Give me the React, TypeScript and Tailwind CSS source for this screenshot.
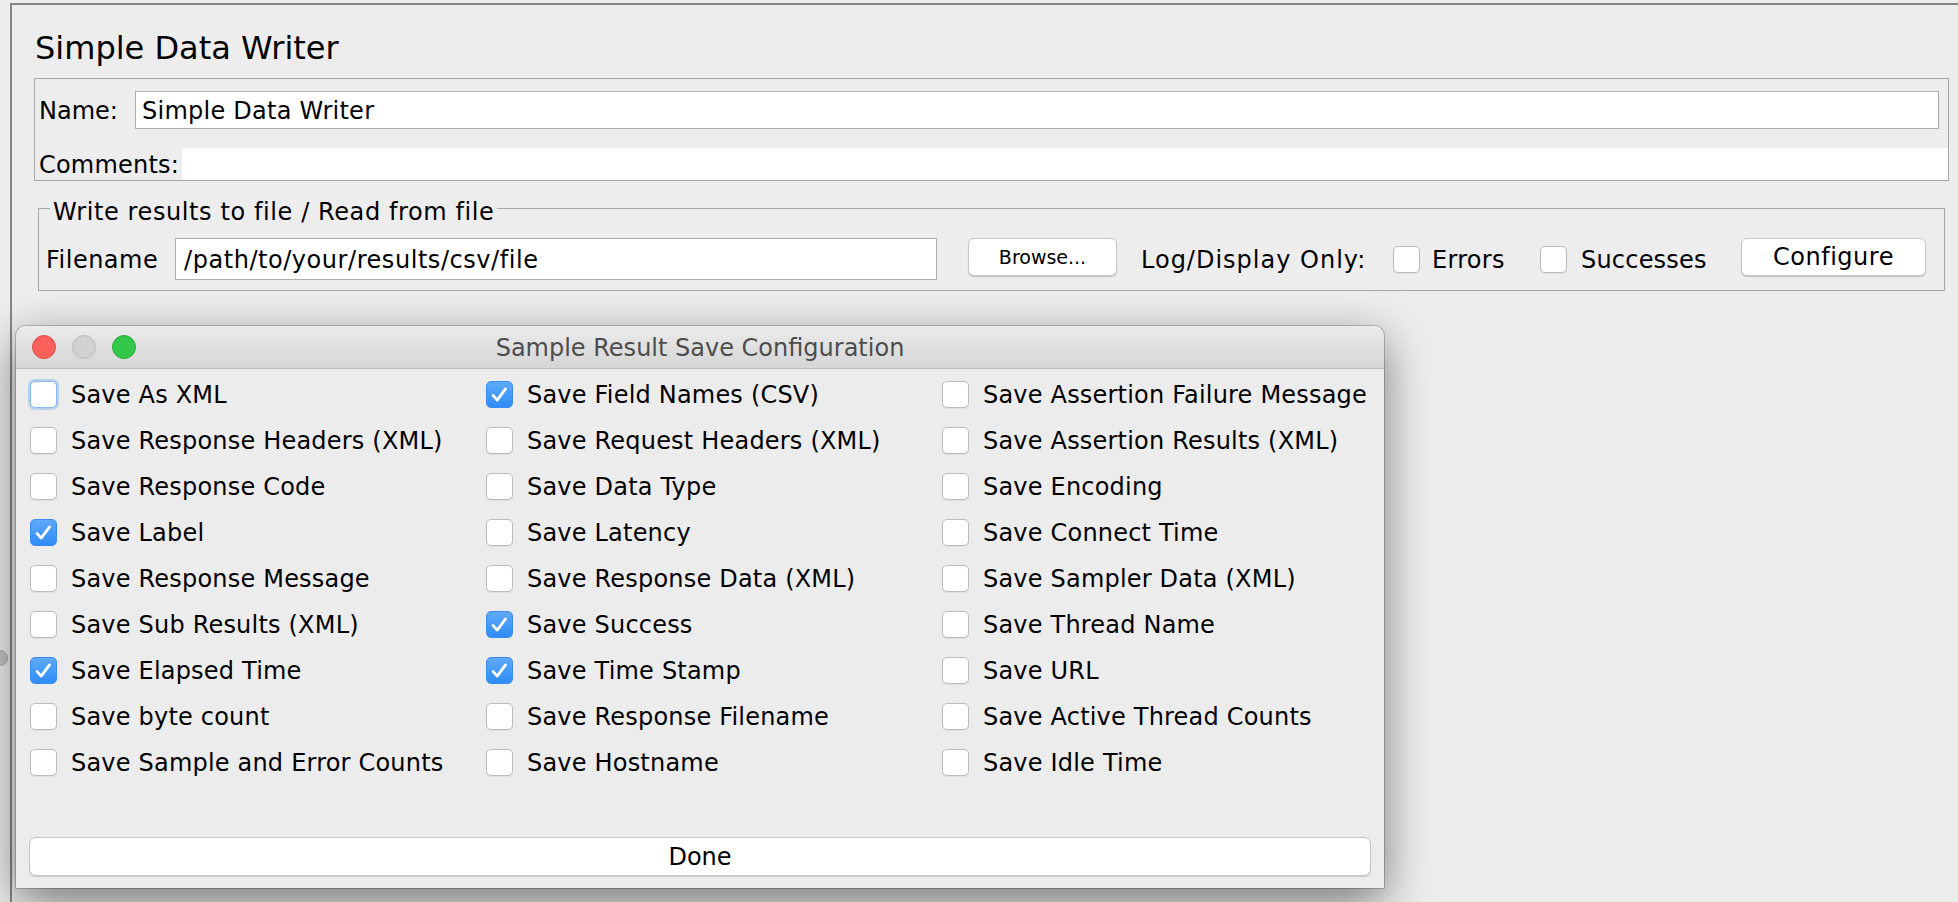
import React from "react";

const col1: [string, boolean][] = [
  ["Save As XML", false],
  ["Save Response Headers (XML)", false],
  ["Save Response Code", false],
  ["Save Label", true],
  ["Save Response Message", false],
  ["Save Sub Results (XML)", false],
  ["Save Elapsed Time", true],
  ["Save byte count", false],
  ["Save Sample and Error Counts", false],
];
const col2: [string, boolean][] = [
  ["Save Field Names (CSV)", true],
  ["Save Request Headers (XML)", false],
  ["Save Data Type", false],
  ["Save Latency", false],
  ["Save Response Data (XML)", false],
  ["Save Success", true],
  ["Save Time Stamp", true],
  ["Save Response Filename", false],
  ["Save Hostname", false],
];
const col3: [string, boolean][] = [
  ["Save Assertion Failure Message", false],
  ["Save Assertion Results (XML)", false],
  ["Save Encoding", false],
  ["Save Connect Time", false],
  ["Save Sampler Data (XML)", false],
  ["Save Thread Name", false],
  ["Save URL", false],
  ["Save Active Thread Counts", false],
  ["Save Idle Time", false],
];

function Box({ checked, focus }: { checked?: boolean; focus?: boolean }) {
  if (checked) {
    return (
      <span className="flex w-[27px] h-[27px] shrink-0 rounded-[5px] border border-[#3b8cf0] bg-[linear-gradient(to_bottom,#5eaafb,#2f8cf8)]">
        <svg viewBox="0 0 27 27" className="w-full h-full">
          <path
            d="M6.5 14.5 L11 19.5 L20 7.5"
            fill="none"
            stroke="white"
            strokeWidth="3"
            strokeLinecap="round"
            strokeLinejoin="round"
          />
        </svg>
      </span>
    );
  }
  if (focus) {
    return (
      <span className="block w-[27px] h-[27px] shrink-0 rounded-[5px] border border-[#8ab8f0] bg-white shadow-[0_0_0_2px_rgba(125,175,240,0.45)]" />
    );
  }
  return (
    <span className="block w-[27px] h-[27px] shrink-0 rounded-[5px] border border-[#bcbcbc] bg-white shadow-[0_1px_1px_rgba(0,0,0,0.06)]" />
  );
}

function Column({ items, first }: { items: [string, boolean][]; first?: boolean }) {
  return (
    <div className="flex flex-col">
      {items.map(([label, checked], i) => (
        <div key={label} className="h-[46px] flex items-center">
          <Box checked={checked} focus={first && i === 0} />
          <span className="ml-[14px] pt-[1px] text-[24px] tracking-[0.2px] whitespace-nowrap">{label}</span>
        </div>
      ))}
    </div>
  );
}

export default function App() {
  return (
    <div className="relative w-[1958px] h-[902px] overflow-hidden bg-[#ededed] text-black font-['DejaVu_Sans',sans-serif]">
      <div className="absolute left-[-8px] top-[650px] w-[16px] h-[16px] rounded-full bg-[#c4c4c4] border border-[#a9a9a9]" />
      <div className="ml-[10px] mt-[3px] h-[899px] border-l-2 border-t-2 border-[#868686] pl-[22px] pr-[9px] pt-[24px]">
        <div className="h-[38px] flex items-center pl-[1px] text-[32px] whitespace-nowrap">
          Simple Data Writer
        </div>

        <div className="mt-[11px] border border-[#a6a6a6] pl-[4px]">
          <div className="mt-[12px] h-[38px] flex items-center">
            <span className="w-[96px] shrink-0 pt-[1px] text-[24px]">Name:</span>
            <div className="flex-1 h-full mr-[9px] border border-[#ababab] bg-white pl-[6px] pt-[1px] flex items-center text-[24px] tracking-[0.25px]">
              Simple Data Writer
            </div>
          </div>
          <div className="mt-[19px] h-[32px] flex">
            <span className="w-[143px] shrink-0 pt-[1px] flex items-center text-[24px] tracking-[0.2px]">Comments:</span>
            <div className="flex-1 bg-white" />
          </div>
        </div>

        <fieldset className="mt-[9px] mx-[4px] border border-[#a6a6a6] px-[7px] pb-[10px]">
          <legend className="ml-[4px] px-[3px] pt-[8px] text-[24px] leading-[28px] tracking-[0.6px] whitespace-nowrap">
            Write results to file / Read from file
          </legend>
          <div className="mt-[12px] h-[42px] flex items-center whitespace-nowrap">
            <span className="w-[129px] shrink-0 pt-[1px] text-[24px] tracking-[0.5px]">Filename</span>
            <div className="w-[762px] h-[42px] shrink-0 border border-[#adadad] bg-white pl-[8px] pt-[1px] flex items-center text-[24px] tracking-[0.55px]">
              /path/to/your/results/csv/file
            </div>
            <button className="self-start ml-[31px] w-[149px] h-[38px] shrink-0 rounded-[6px] border border-[#c6c6c6] bg-white shadow-[0_1px_1px_rgba(0,0,0,0.18)] text-[19px] flex items-center justify-center">
              Browse...
            </button>
            <span className="ml-[24px] w-[252px] shrink-0 pt-[1px] text-[24px] tracking-[1px]">Log/Display Only:</span>
            <Box />
            <span className="ml-[12px] w-[108px] shrink-0 pt-[2px] text-[24px] tracking-[0.3px]">Errors</span>
            <Box />
            <span className="ml-[14px] w-[160px] shrink-0 pt-[2px] text-[24px] tracking-[0.2px]">Successes</span>
            <button className="self-start w-[185px] h-[38px] shrink-0 rounded-[6px] border border-[#c6c6c6] bg-white shadow-[0_1px_1px_rgba(0,0,0,0.18)] text-[24px] tracking-[0.5px] flex items-center justify-center">
              Configure
            </button>
          </div>
        </fieldset>
      </div>

      <div className="absolute left-[16px] top-[326px] w-[1368px] h-[562px] flex flex-col rounded-t-[10px] bg-[#ececec] shadow-[0_0_0_1px_rgba(0,0,0,0.2),0_14px_45px_rgba(0,0,0,0.5)]">
        <div className="h-[43px] shrink-0 grid grid-cols-[1fr_auto_1fr] items-center rounded-t-[10px] border-b border-[#bdbdbd] bg-[linear-gradient(to_bottom,#ececec,#d5d5d5)]">
          <div className="flex items-center gap-[16px] pl-[16px]">
            <span className="block w-[24px] h-[24px] rounded-full bg-[#fc605b] border border-[#de4a42]" />
            <span className="block w-[24px] h-[24px] rounded-full bg-[#d1d1d1] border border-[#bdbdbd]" />
            <span className="block w-[24px] h-[24px] rounded-full bg-[#34c84a] border border-[#27a937]" />
          </div>
          <div className="pt-[1px] text-[24px] text-[#4d4d4d] whitespace-nowrap">Sample Result Save Configuration</div>
          <div />
        </div>
        <div className="pt-[2px] pl-[14px] grid grid-cols-[456px_456px_1fr]">
          <Column items={col1} first />
          <Column items={col2} />
          <Column items={col3} />
        </div>
        <button className="mt-[52px] mx-[13px] h-[39px] shrink-0 rounded-[7px] border border-[#c6c6c6] bg-white shadow-[0_1px_1px_rgba(0,0,0,0.15)] text-[24px] flex items-center justify-center">
          Done
        </button>
      </div>
    </div>
  );
}
